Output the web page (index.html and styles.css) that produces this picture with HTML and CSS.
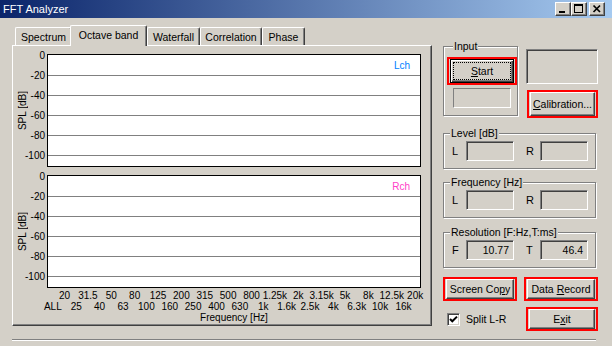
FILE: index.html
```html
<!DOCTYPE html>
<html lang="en">
<head>
    <meta charset="UTF-8">
    <title>FFT Analyzer</title>
    <link rel="stylesheet" href="styles.css">
</head>
<body>
    <div class="titlebar">
        <span class="title">FFT Analyzer</span>
        <div class="caption-btns">
            <span class="cbtn"><svg width="14" height="12" viewBox="0 0 14 12"><rect x="3" y="8" width="6" height="2"/></svg></span>
            <span class="cbtn"><svg width="14" height="12" viewBox="0 0 14 12"><path fill-rule="evenodd" d="M2 1h9v9H2z M3 3v6h7V3z"/></svg></span>
            <span class="cbtn close"><svg width="14" height="12" viewBox="0 0 14 12"><path d="M3.5 2.5L10 9M10 2.5L3.5 9" stroke="#000" stroke-width="1.7"/></svg></span>
        </div>
    </div>

    <div class="client">
        <div class="tabs">
            <div class="tabstrip">
                <div class="tab t-spectrum">Spectrum</div>
                <div class="tab active t-octave">Octave band</div>
                <div class="tab t-waterfall">Waterfall</div>
                <div class="tab t-corr">Correlation</div>
                <div class="tab t-phase">Phase</div>
            </div>
            <div class="tabpanel">
                <div class="chart">
                    <div class="ytitle"><span>SPL [dB]</span></div>
                    <div class="ticks">
                        <span>0</span><span>-20</span><span>-40</span><span>-60</span><span>-80</span><span>-100</span>
                    </div>
                    <div class="plot">
                        <div class="gl"><span class="ch lch">Lch</span></div>
                        <div class="gl"></div>
                        <div class="gl"></div>
                        <div class="gl"></div>
                        <div class="gl"></div>
                    </div>
                </div>
                <div class="chart">
                    <div class="ytitle"><span>SPL [dB]</span></div>
                    <div class="ticks">
                        <span>0</span><span>-20</span><span>-40</span><span>-60</span><span>-80</span><span>-100</span>
                    </div>
                    <div class="plot">
                        <div class="gl"><span class="ch rch">Rch</span></div>
                        <div class="gl"></div>
                        <div class="gl"></div>
                        <div class="gl"></div>
                        <div class="gl"></div>
                    </div>
                </div>
                <div class="freq">
                    <div class="frow odd">
                        <span>20</span><span>31.5</span><span>50</span><span>80</span>
                        <span>125</span><span>200</span><span>315</span><span>500</span>
                        <span>800</span><span>1.25k</span><span>2k</span><span>3.15k</span>
                        <span>5k</span><span>8k</span><span>12.5k</span><span>20k</span>
                    </div>
                    <div class="frow even">
                        <span>ALL</span><span>25</span><span>40</span><span>63</span>
                        <span>100</span><span>160</span><span>250</span><span>400</span>
                        <span>630</span><span>1k</span><span>1.6k</span><span>2.5k</span>
                        <span>4k</span><span>6.3k</span><span>10k</span><span>16k</span>
                    </div>
                    <div class="xtitle">Frequency [Hz]</div>
                </div>
            </div>
        </div>

        <div class="side">
            <div class="row-top">
                <div class="group input-group">
                    <div class="legend">Input</div>
                    <div class="hl start-hl">
                        <button class="btn default"><span class="focus"><span><u>S</u>tart</span></span></button>
                    </div>
                    <div class="thin-field"></div>
                </div>
                <div class="right-col">
                    <div class="field big-field"></div>
                    <div class="hl cal-hl">
                        <button class="btn"><span><u>C</u>alibration...</span></button>
                    </div>
                </div>
            </div>

            <div class="group level">
                <div class="legend">Level [dB]</div>
                <div class="lrow">
                    <span class="lbl">L</span><div class="field val"></div>
                    <span class="lbl r">R</span><div class="field val"></div>
                </div>
            </div>

            <div class="group freq-group">
                <div class="legend">Frequency [Hz]</div>
                <div class="lrow">
                    <span class="lbl">L</span><div class="field val"></div>
                    <span class="lbl r">R</span><div class="field val"></div>
                </div>
            </div>

            <div class="group res-group">
                <div class="legend">Resolution [F:Hz,T:ms]</div>
                <div class="lrow">
                    <span class="lbl">F</span><div class="field val">10.77</div>
                    <span class="lbl r">T</span><div class="field val">46.4</div>
                </div>
            </div>

            <div class="btn-row">
                <div class="hl wide-hl"><button class="btn"><span>Screen Co<u>p</u>y</span></button></div>
                <div class="hl wide-hl"><button class="btn"><span>Data <u>R</u>ecord</span></button></div>
            </div>

            <div class="bottom-row">
                <label class="check">
                    <span class="cbox"><svg width="9" height="9" viewBox="0 0 9 9"><path d="M1 4l2.3 2.3L8 1.6" fill="none" stroke="#000" stroke-width="2"/></svg></span>
                    <span>Split L-R</span>
                </label>
                <div class="hl exit-hl"><button class="btn"><span>E<u>x</u>it</span></button></div>
            </div>
        </div>
    </div>

    <div class="sep"></div>
</body>
</html>
```

FILE: styles.css
```css
* {
    box-sizing: border-box;
}
body {
    margin: 0;
    width: 612px;
    height: 346px;
    overflow: hidden;
    background: #d4d0c8;
    font-family: "Liberation Sans", Arial, sans-serif;
    font-size: 10px;
    color: #000;
}

/* title bar */
.titlebar {
    height: 18px;
    display: flex;
    align-items: center;
    padding: 0 7px 0 3px;
    background: linear-gradient(to right, #0a246a, #a6caf0);
    color: #fff;
    font-size: 11px;
}
.title {
    flex: 1;
}
.caption-btns {
    display: flex;
}
.cbtn {
    width: 16px;
    height: 14px;
    display: flex;
    align-items: center;
    justify-content: center;
    background: #d4d0c8;
    border: 1px solid;
    border-color: #fff #404040 #404040 #fff;
    box-shadow: inset -1px -1px #808080;
}
.cbtn.close {
    margin-left: 2px;
}

.client {
    display: flex;
    padding: 7px 0 0 12px;
}

/* tabs */
.tabs {
    width: 420px;
}
.tabstrip {
    height: 20px;
    display: flex;
    align-items: flex-end;
    padding-left: 3px;
}
.tab {
    height: 18px;
    display: flex;
    align-items: center;
    justify-content: center;
    border: 1px solid #fff;
    border-bottom: 0;
    border-right-color: #404040;
    border-radius: 2px 2px 0 0;
    box-shadow: inset -1px 0 #808080;
    white-space: nowrap;
    font-size: 10.5px;
}
.tab.active {
    height: 21px;
    margin-left: -2px;
    margin-bottom: -1px;
    position: relative;
    z-index: 1;
    background: #d4d0c8;
    padding-bottom: 2px;
}
.t-spectrum { width: 57px; }
.t-octave { width: 77px; }
.t-waterfall { width: 53px; }
.t-corr { width: 62px; }
.t-phase { width: 43px; }

.tabpanel {
    height: 281px;
    border: 1px solid #fff;
    border-right-color: #404040;
    border-bottom-color: #404040;
    box-shadow: inset -1px -1px #808080;
    padding-top: 8px;
}

/* charts */
.chart {
    display: flex;
}
.chart + .chart {
    margin-top: 8px;
}
.ytitle {
    width: 18px;
    display: flex;
    align-items: center;
    justify-content: center;
}
.ytitle span {
    writing-mode: vertical-rl;
    transform: rotate(180deg);
    line-height: 11px;
    white-space: nowrap;
}
.ticks {
    width: 14px;
    margin: -9px 2px 0 0;
    display: flex;
    flex-direction: column;
}
.ticks span {
    height: 20px;
    display: flex;
    align-items: center;
    justify-content: flex-end;
    white-space: nowrap;
}
.plot {
    width: 374px;
    height: 113px;
    border: 1px solid #000;
    background: #fff;
    padding-top: 1px;
}
.gl {
    height: 20px;
    border-bottom: 1px solid #808080;
    display: flex;
    align-items: center;
    justify-content: flex-end;
    padding-right: 10px;
}
.lch {
    color: #0080ff;
}
.rch {
    color: #ff40c8;
}

.freq {
    width: 374px;
    margin: 2px 0 0 34px;
    line-height: 11px;
}
.frow {
    display: flex;
}
.frow span {
    flex: 1 1 0;
    min-width: 0;
    display: flex;
    justify-content: center;
    white-space: nowrap;
}
.frow.odd {
    margin: 0 -5.84px 0 5.84px;
}
.frow.even {
    margin: 0 5.84px 0 -5.84px;
}
.xtitle {
    text-align: center;
}

/* side panel */
.side {
    width: 155px;
    margin: 21px 0 0 11px;
    display: flex;
    flex-direction: column;
    font-size: 10.5px;
}
.row-top {
    display: flex;
    align-items: flex-start;
}
.group {
    display: flex;
    flex-direction: column;
    border: 1px solid #808080;
    box-shadow: inset 1px 1px #fff, 1px 1px #fff;
}
.legend {
    align-self: flex-start;
    height: 12px;
    line-height: 12px;
    margin: -7px 0 0 6px;
    padding: 0 1px;
    background: #d4d0c8;
    white-space: nowrap;
}
.input-group {
    width: 75px;
    height: 70px;
    padding-left: 3px;
}
.hl {
    display: flex;
    border: 2px solid #ff0000;
    padding: 0 1px;
}
.start-hl {
    width: 70px;
    height: 28px;
    margin-top: 5px;
}
.thin-field {
    width: 58px;
    height: 20px;
    margin: 3px 0 0 6px;
    border: 1px solid;
    border-color: #808080 #fff #fff #808080;
}
.right-col {
    width: 72px;
    margin-left: 8px;
    display: flex;
    flex-direction: column;
}
.big-field {
    height: 35px;
    margin-top: 3px;
}
.cal-hl {
    width: 71px;
    height: 28px;
    margin: 6px 0 0 1px;
}

.btn {
    flex: 1;
    display: flex;
    align-items: center;
    justify-content: center;
    padding: 0;
    font: inherit;
    color: #000;
    background: #d4d0c8;
    border: 1px solid;
    border-color: #fff #404040 #404040 #fff;
    box-shadow: inset -1px -1px #808080;
    white-space: nowrap;
}
.btn.default {
    border-color: #000;
    padding: 2px;
    box-shadow: inset 1px 1px #fff, inset -1px -1px #404040, inset -2px -2px #808080;
}
.focus {
    flex: 1;
    align-self: stretch;
    display: flex;
    align-items: center;
    justify-content: center;
    border: 1px dotted #000;
}

.field {
    background: #d4d0c8;
    border: 1px solid;
    border-color: #808080 #fff #fff #808080;
    box-shadow: inset 1px 1px #404040;
}
.level,
.freq-group,
.res-group {
    width: 153px;
    height: 36px;
}
.level {
    margin-top: 15px;
}
.freq-group {
    margin-top: 13px;
}
.res-group {
    margin-top: 14px;
}
.lrow {
    display: flex;
    align-items: center;
    margin-top: 2px;
    padding-left: 8px;
}
.lbl {
    width: 14px;
    font-size: 11px;
}
.lbl.r {
    margin-left: 12px;
}
.val {
    width: 48px;
    height: 20px;
    line-height: 18px;
    text-align: right;
    padding-right: 4px;
}

.btn-row {
    display: flex;
    justify-content: space-between;
    margin-top: 9px;
}
.wide-hl {
    width: 74px;
    height: 24px;
}
.bottom-row {
    display: flex;
    align-items: center;
    margin-top: 6px;
}
.check {
    display: flex;
    align-items: center;
    margin-left: 4px;
    gap: 6px;
}
.cbox {
    width: 13px;
    height: 13px;
    display: flex;
    align-items: center;
    justify-content: center;
    background: #fff;
    border: 1px solid;
    border-color: #808080 #fff #fff #808080;
    box-shadow: inset 1px 1px #404040, inset -1px -1px #d4d0c8;
}
.exit-hl {
    width: 72px;
    height: 24px;
    margin-left: auto;
}

.sep {
    width: 584px;
    margin: 8px 0 0 12px;
    border-top: 1px solid #808080;
    border-bottom: 1px solid #fff;
}
```
